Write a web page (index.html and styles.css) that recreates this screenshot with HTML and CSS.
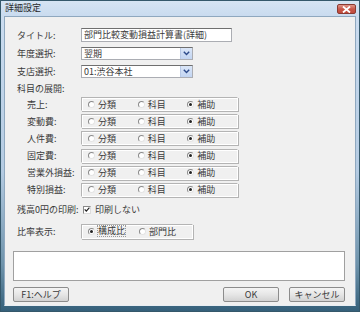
FILE: index.html
```html
<html>
<head>
    <title>詳細設定</title>
    <link rel="stylesheet" href="styles.css">
</head>
<body>

<div class="window">

    <div class="titlebar">
        <span class="title">詳細設定</span>
        <span class="close-btn">
            <svg width="9" height="7" viewBox="0 0 9 7"><path d="M1 0.5 L8 6.5 M8 0.5 L1 6.5" stroke="#fff" stroke-width="1.8"/></svg>
        </span>
    </div>

    <div class="content">

        <div class="form-row row-title">
            <label>タイトル:</label>
            <div class="text-field wide">部門比較変動損益計算書(詳細)</div>
        </div>

        <div class="form-row row-select">
            <label>年度選択:</label>
            <div class="select-field">
                <span class="select-text">翌期</span>
                <span class="select-btn"><svg width="7" height="5" viewBox="0 0 7 5"><path d="M0.8 0.8 L3.5 3.6 L6.2 0.8" stroke="#2c4a8a" stroke-width="1.4" fill="none"/></svg></span>
            </div>
        </div>

        <div class="form-row row-select">
            <label>支店選択:</label>
            <div class="select-field">
                <span class="select-text">01:渋谷本社</span>
                <span class="select-btn"><svg width="7" height="5" viewBox="0 0 7 5"><path d="M0.8 0.8 L3.5 3.6 L6.2 0.8" stroke="#2c4a8a" stroke-width="1.4" fill="none"/></svg></span>
            </div>
        </div>

        <div class="section-label">科目の展開:</div>

        <div class="expand-list">
            <div class="form-row">
                <label class="sub-label">売上:</label>
                <div class="group-box">
                    <span class="option"><span class="radio"></span>分類</span>
                    <span class="option"><span class="radio"></span>科目</span>
                    <span class="option"><span class="radio checked"></span>補助</span>
                </div>
            </div>
            <div class="form-row">
                <label class="sub-label">変動費:</label>
                <div class="group-box">
                    <span class="option"><span class="radio"></span>分類</span>
                    <span class="option"><span class="radio"></span>科目</span>
                    <span class="option"><span class="radio checked"></span>補助</span>
                </div>
            </div>
            <div class="form-row">
                <label class="sub-label">人件費:</label>
                <div class="group-box">
                    <span class="option"><span class="radio"></span>分類</span>
                    <span class="option"><span class="radio"></span>科目</span>
                    <span class="option"><span class="radio checked"></span>補助</span>
                </div>
            </div>
            <div class="form-row">
                <label class="sub-label">固定費:</label>
                <div class="group-box">
                    <span class="option"><span class="radio"></span>分類</span>
                    <span class="option"><span class="radio"></span>科目</span>
                    <span class="option"><span class="radio checked"></span>補助</span>
                </div>
            </div>
            <div class="form-row">
                <label class="sub-label">営業外損益:</label>
                <div class="group-box">
                    <span class="option"><span class="radio"></span>分類</span>
                    <span class="option"><span class="radio"></span>科目</span>
                    <span class="option"><span class="radio checked"></span>補助</span>
                </div>
            </div>
            <div class="form-row">
                <label class="sub-label">特別損益:</label>
                <div class="group-box">
                    <span class="option"><span class="radio"></span>分類</span>
                    <span class="option"><span class="radio"></span>科目</span>
                    <span class="option"><span class="radio checked"></span>補助</span>
                </div>
            </div>
        </div>

        <div class="form-row row-check">
            <label>残高0円の印刷:</label>
            <span class="check-option">
                <span class="checkbox"><svg width="7" height="7" viewBox="0 0 7 7"><path d="M0.8 3.4 L2.7 5.4 L6.3 1.2" stroke="#222" stroke-width="1.4" fill="none"/></svg></span>
                印刷しない
            </span>
        </div>

        <div class="form-row row-ratio">
            <label>比率表示:</label>
            <div class="group-box ratio-box">
                <span class="option"><span class="radio checked"></span><span class="focused">構成比</span></span>
                <span class="option"><span class="radio"></span>部門比</span>
            </div>
        </div>

        <div class="memo-box"></div>

        <div class="button-bar">
            <button class="win-btn">F1:ヘルプ</button>
            <span class="spacer"></span>
            <button class="win-btn">OK</button>
            <button class="win-btn">キャンセル</button>
        </div>

    </div>

</div>

</body>
</html>
```

FILE: styles.css
```css
body
{
    margin: 0;
    font-family: "Noto Sans CJK JP", "Liberation Sans", sans-serif;
    font-size: 9px;
    color: #3a3a3a;
    background-color: #ffffff;
}

.window
{
    width: 360px;
    height: 312px;
    box-sizing: border-box;
    border: 1px solid #35586b;
    padding: 0 3px 5px 3px;
    background: linear-gradient(#cddef1, #b4cbe2 55%, #6e93ab 85%, #35607a);
    display: flex;
    flex-direction: column;
}

.titlebar
{
    height: 15px;
    display: flex;
    align-items: flex-start;
    margin: 0 -3px;
    padding: 0 3px 0 4px;
    background: linear-gradient(#d6e4f3, #c9dbef);
}

.title
{
    line-height: 14px;
    color: #2a2a2a;
}

.close-btn
{
    margin-left: auto;
    margin-top: 3px;
    width: 19px;
    height: 10px;
    box-sizing: border-box;
    border: 1px solid #8a3a32;
    border-radius: 2px;
    background: linear-gradient(#e0968a, #c9574a 50%, #c04a3c);
    display: flex;
    align-items: center;
    justify-content: center;
}

.content
{
    flex: 1;
    background-color: #f0f0f0;
    border: 1px solid #8fa8bf;
    border-bottom-color: #e9eef3;
    padding: 11px 9px 0 12px;
    display: flex;
    flex-direction: column;
}

.form-row
{
    display: flex;
    align-items: center;
}

.form-row label
{
    width: 64px;
    flex-shrink: 0;
    white-space: nowrap;
}

.row-title
{
    height: 14px;
}

.row-select
{
    height: 13px;
    margin-top: 5px;
}

.text-field
{
    width: 151px;
    height: 14px;
    box-sizing: border-box;
    background-color: #fff;
    border: 1px solid #abadb3;
    border-top-color: #6f6f6f;
    padding-left: 2px;
    line-height: 12px;
    white-space: nowrap;
    overflow: hidden;
}

.select-field
{
    width: 112px;
    height: 13px;
    box-sizing: border-box;
    background-color: #fff;
    border: 1px solid #abadb3;
    border-top-color: #6f6f6f;
    display: flex;
}

.select-text
{
    flex: 1;
    padding-left: 2px;
    line-height: 11px;
}

.select-btn
{
    width: 11px;
    background: linear-gradient(#dbe6f8, #c2d5f2);
    border-left: 1px solid #b8c9e6;
    display: flex;
    align-items: center;
    justify-content: center;
}

.section-label
{
    height: 12px;
    line-height: 12px;
    margin-top: 5px;
}

.expand-list
{
    margin-top: 2px;
    display: grid;
    grid-auto-rows: 14px;
    row-gap: 3.2px;
}

.form-row .sub-label
{
    padding-left: 10px;
    box-sizing: border-box;
}

.group-box
{
    width: 157px;
    height: 14px;
    box-sizing: border-box;
    border: 1px solid #b4b4b4;
    border-right-color: #ffffff;
    border-bottom-color: #ffffff;
    box-shadow: 1px 1px 0 #b4b4b4, inset 1px 1px 0 #ffffff;
    display: flex;
    align-items: center;
    padding-left: 6px;
}

.option
{
    width: 50px;
    display: flex;
    align-items: center;
    white-space: nowrap;
}

.radio
{
    width: 7px;
    height: 7px;
    box-sizing: border-box;
    border-radius: 50%;
    border: 1px solid #8a8a8a;
    border-right-color: #e4e4e4;
    border-bottom-color: #e4e4e4;
    background-color: #fff;
    margin-right: 3px;
    display: flex;
    align-items: center;
    justify-content: center;
}

.radio.checked::after
{
    content: "";
    width: 3px;
    height: 3px;
    border-radius: 50%;
    background-color: #222;
}

.row-check
{
    height: 14px;
    margin-top: 6px;
}

.check-option
{
    display: flex;
    align-items: center;
    margin-left: 2px;
}

.checkbox
{
    width: 8px;
    height: 8px;
    box-sizing: border-box;
    border: 1px solid #8a8a8a;
    border-right-color: #dcdcdc;
    border-bottom-color: #dcdcdc;
    background-color: #fff;
    margin-right: 4px;
    display: flex;
    align-items: center;
    justify-content: center;
}

.row-ratio
{
    margin-top: 7px;
}

.ratio-box
{
    width: 112px;
    height: 15px;
}

.ratio-box .option
{
    width: 51px;
}

.focused
{
    border: 1px dotted #9a9a9a;
    line-height: 10px;
    margin-left: -1px;
}

.memo-box
{
    margin: 12px 1px 0 -4px;
    height: 30px;
    box-sizing: border-box;
    background-color: #fff;
    border: 1px solid #a0a0a0;
}

.button-bar
{
    margin: 6px 1px 0 -4px;
    display: flex;
    gap: 10px;
}

.spacer
{
    flex: 1;
}

.win-btn
{
    width: 56px;
    height: 15px;
    padding: 0;
    font-family: inherit;
    font-size: 9px;
    color: #3a3a3a;
    border: 1px solid #8c8c8c;
    border-radius: 2px;
    background: linear-gradient(#f4f4f4, #e6e6e6 50%, #d2d2d2);
    line-height: 13px;
}
```
